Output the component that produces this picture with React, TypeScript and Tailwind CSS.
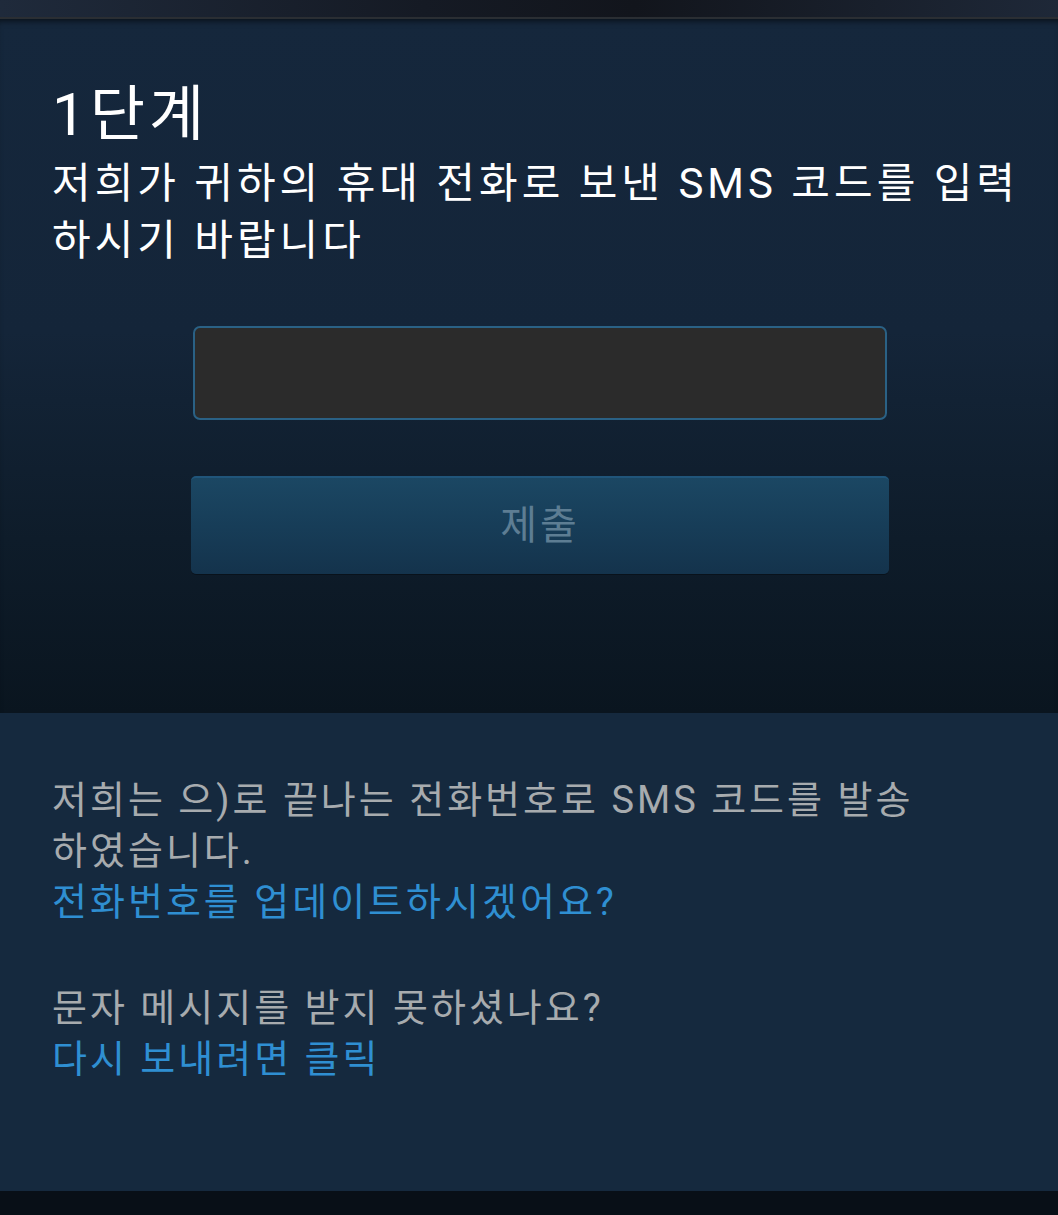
export default function App() {
  const font = "font-['Roboto','Noto_Sans_CJK_KR',sans-serif]";

  return (
    <main className={`w-full min-h-[1215px] flex flex-col bg-[#080f17] ${font}`}>
      {/* top banner strip */}
      <div className="h-[19px] w-full bg-[linear-gradient(90deg,#1f2a3b_0%,#151a24_40%,#12151c_60%,#1e2838_100%)] border-b-2 border-[#2a2e33]" />

      {/* ================= STEP / CODE ENTRY ================= */}
      <section className="h-[694px] w-full bg-[linear-gradient(180deg,#15273c_0%,#142539_45%,#0e1c2a_75%,#0a151f_100%)] shadow-[inset_0_6px_6px_-4px_rgba(0,0,0,0.6)] pl-[52px] pr-[20px] pt-[58px]">
        <h1 className="text-white text-[60px] leading-[76px] tracking-[4px]">1단계</h1>
        <p className="text-white text-[42px] leading-[57px] tracking-[4px] mt-[2px]">
          저희가 귀하의 휴대 전화로 보낸 SMS 코드를 입력하시기 바랍니다
        </p>

        <div className="mt-[57px] flex flex-col items-center pr-[10px]">
          <input
            type="text"
            className="w-[694px] h-[94px] rounded-[7px] bg-[#2b2b2b] border-2 border-[#2a6185] outline-none px-4 text-white text-[36px]"
          />
          <button className="mt-[56px] w-[698px] h-[98px] rounded-[5px] bg-[linear-gradient(180deg,#1b4763_0%,#173d58_50%,#14334c_100%)] border-t-2 border-[#20557a] text-[#5d7d93] text-[40px] tracking-[3px] shadow-[0_1px_0_rgba(0,0,0,0.3)]">
            제출
          </button>
        </div>
      </section>

      {/* ================= SENT INFO ================= */}
      <section className="h-[478px] w-full bg-[#15293e] px-[52px] pt-[62px]">
        <p className="text-[#a7abae] text-[38px] leading-[51px] tracking-[3px] max-w-[870px]">
          저희는 으)로 끝나는 전화번호로 SMS 코드를 발송하였습니다.
        </p>
        <a href="#" className="block text-[#2f8fd2] text-[38px] leading-[51px] tracking-[3px]">
          전화번호를 업데이트하시겠어요?
        </a>

        <p className="mt-[55px] text-[#a7abae] text-[38px] leading-[51px] tracking-[3px]">
          문자 메시지를 받지 못하셨나요?
        </p>
        <a href="#" className="block text-[#2f8fd2] text-[38px] leading-[51px] tracking-[3px]">
          다시 보내려면 클릭
        </a>
      </section>

      {/* footer */}
      <div className="flex-1 w-full bg-[#080f17]" />
    </main>
  );
}
